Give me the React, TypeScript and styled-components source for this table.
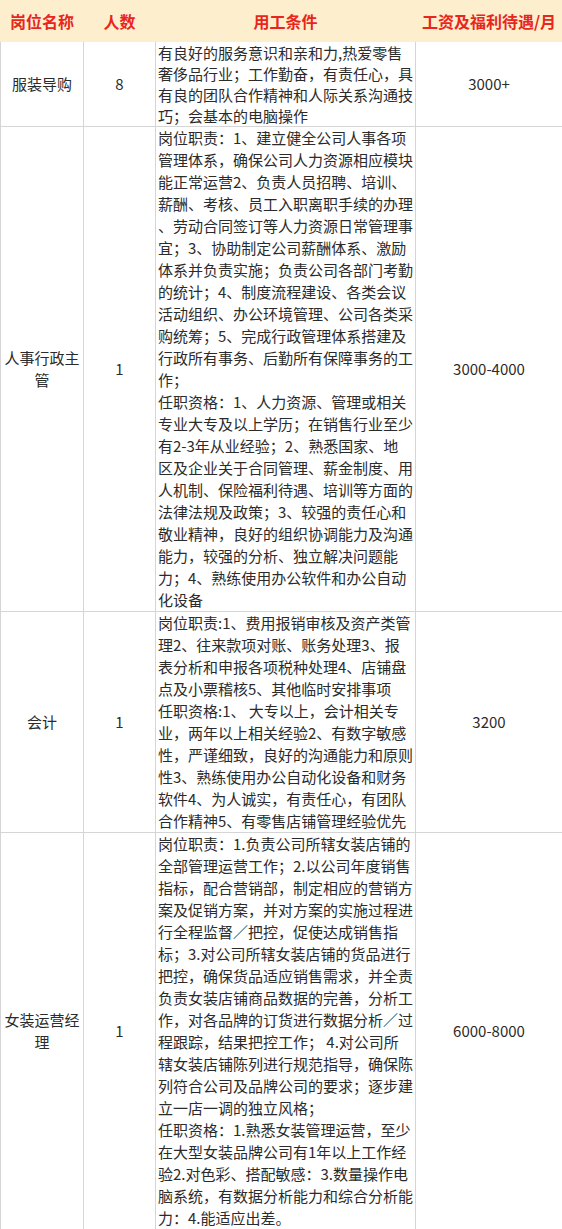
import styled, { createGlobalStyle } from "styled-components"

const GlobalStyle = createGlobalStyle`
  body {
    margin: 0;
    background: #fff;
    font-family: "Microsoft YaHei", "Noto Sans CJK SC", "Noto Sans", sans-serif;
  }
`

const Table = styled.table`
  width: 562px;
  border-collapse: collapse;
  table-layout: fixed;
  color: #2b2b2b;
  font-size: 15px;
`

const HeadCell = styled.th`
  height: 40px;
  padding: 0;
  background: #fdefcd;
  border: 1px solid #fdefcd;
  color: #e8261c;
  font-size: 16px;
  font-weight: bold;
  text-align: center;
  white-space: nowrap;
`

const Cell = styled.td<{ $lh: number; $left?: boolean }>`
  padding: 0 2px;
  border: 1px solid #d5d5d5;
  line-height: ${(p) => p.$lh}px;
  text-align: ${(p) => (p.$left ? "left" : "center")};
  vertical-align: middle;
`

const Line = styled.span`
  display: block;
  white-space: nowrap;
`

type TJob = {
  title: string
  count: string
  lines: string[]
  pay: string
  lh: number
}

const jobs: TJob[] = [
  {
    title: "服装导购",
    count: "8",
    pay: "3000+",
    lh: 21,
    lines: [
      "有良好的服务意识和亲和力,热爱零售",
      "奢侈品行业；工作勤奋，有责任心，具",
      "有良的团队合作精神和人际关系沟通技",
      "巧；会基本的电脑操作",
    ],
  },
  {
    title: "人事行政主管",
    count: "1",
    pay: "3000-4000",
    lh: 22,
    lines: [
      "岗位职责：1、建立健全公司人事各项",
      "管理体系，确保公司人力资源相应模块",
      "能正常运营2、负责人员招聘、培训、",
      "薪酬、考核、员工入职离职手续的办理",
      "、劳动合同签订等人力资源日常管理事",
      "宜；3、协助制定公司薪酬体系、激励",
      "体系并负责实施；负责公司各部门考勤",
      "的统计；4、制度流程建设、各类会议",
      "活动组织、办公环境管理、公司各类采",
      "购统筹；5、完成行政管理体系搭建及",
      "行政所有事务、后勤所有保障事务的工",
      "作；",
      "任职资格：1、人力资源、管理或相关",
      "专业大专及以上学历；在销售行业至少",
      "有2-3年从业经验；2、熟悉国家、地",
      "区及企业关于合同管理、薪金制度、用",
      "人机制、保险福利待遇、培训等方面的",
      "法律法规及政策；3、较强的责任心和",
      "敬业精神，良好的组织协调能力及沟通",
      "能力，较强的分析、独立解决问题能",
      "力；4、熟练使用办公软件和办公自动",
      "化设备",
    ],
  },
  {
    title: "会计",
    count: "1",
    pay: "3200",
    lh: 22,
    lines: [
      "岗位职责:1、费用报销审核及资产类管",
      "理2、往来款项对账、账务处理3、报",
      "表分析和申报各项税种处理4、店铺盘",
      "点及小票稽核5、其他临时安排事项",
      "任职资格:1、 大专以上，会计相关专",
      "业，两年以上相关经验2、有数字敏感",
      "性，严谨细致，良好的沟通能力和原则",
      "性3、熟练使用办公自动化设备和财务",
      "软件4、为人诚实，有责任心，有团队",
      "合作精神5、有零售店铺管理经验优先",
    ],
  },
  {
    title: "女装运营经理",
    count: "1",
    pay: "6000-8000",
    lh: 22,
    lines: [
      "岗位职责：1.负责公司所辖女装店铺的",
      "全部管理运营工作；2.以公司年度销售",
      "指标，配合营销部，制定相应的营销方",
      "案及促销方案，并对方案的实施过程进",
      "行全程监督／把控，促使达成销售指",
      "标；3.对公司所辖女装店铺的货品进行",
      "把控，确保货品适应销售需求，并全责",
      "负责女装店铺商品数据的完善，分析工",
      "作，对各品牌的订货进行数据分析／过",
      "程跟踪，结果把控工作； 4.对公司所",
      "辖女装店铺陈列进行规范指导，确保陈",
      "列符合公司及品牌公司的要求；逐步建",
      "立一店一调的独立风格；",
      "任职资格：1.熟悉女装管理运营，至少",
      "在大型女装品牌公司有1年以上工作经",
      "验2.对色彩、搭配敏感：3.数量操作电",
      "脑系统，有数据分析能力和综合分析能",
      "力：4.能适应出差。",
    ],
  },
]

const App = () => {
  return (
    <>
      <GlobalStyle />
      <Table>
        <colgroup>
          <col style={{ width: 83 }} />
          <col style={{ width: 72 }} />
          <col style={{ width: 260 }} />
          <col style={{ width: 147 }} />
        </colgroup>
        <thead>
          <tr>
            <HeadCell>岗位名称</HeadCell>
            <HeadCell>人数</HeadCell>
            <HeadCell>用工条件</HeadCell>
            <HeadCell>工资及福利待遇/月</HeadCell>
          </tr>
        </thead>
        <tbody>
          {jobs.map((job) => (
            <tr key={job.title}>
              <Cell $lh={22}>{job.title}</Cell>
              <Cell $lh={22}>{job.count}</Cell>
              <Cell $lh={job.lh} $left>
                {job.lines.map((line, i) => (
                  <Line key={i}>{line}</Line>
                ))}
              </Cell>
              <Cell $lh={22}>{job.pay}</Cell>
            </tr>
          ))}
        </tbody>
      </Table>
    </>
  )
}

export default App
